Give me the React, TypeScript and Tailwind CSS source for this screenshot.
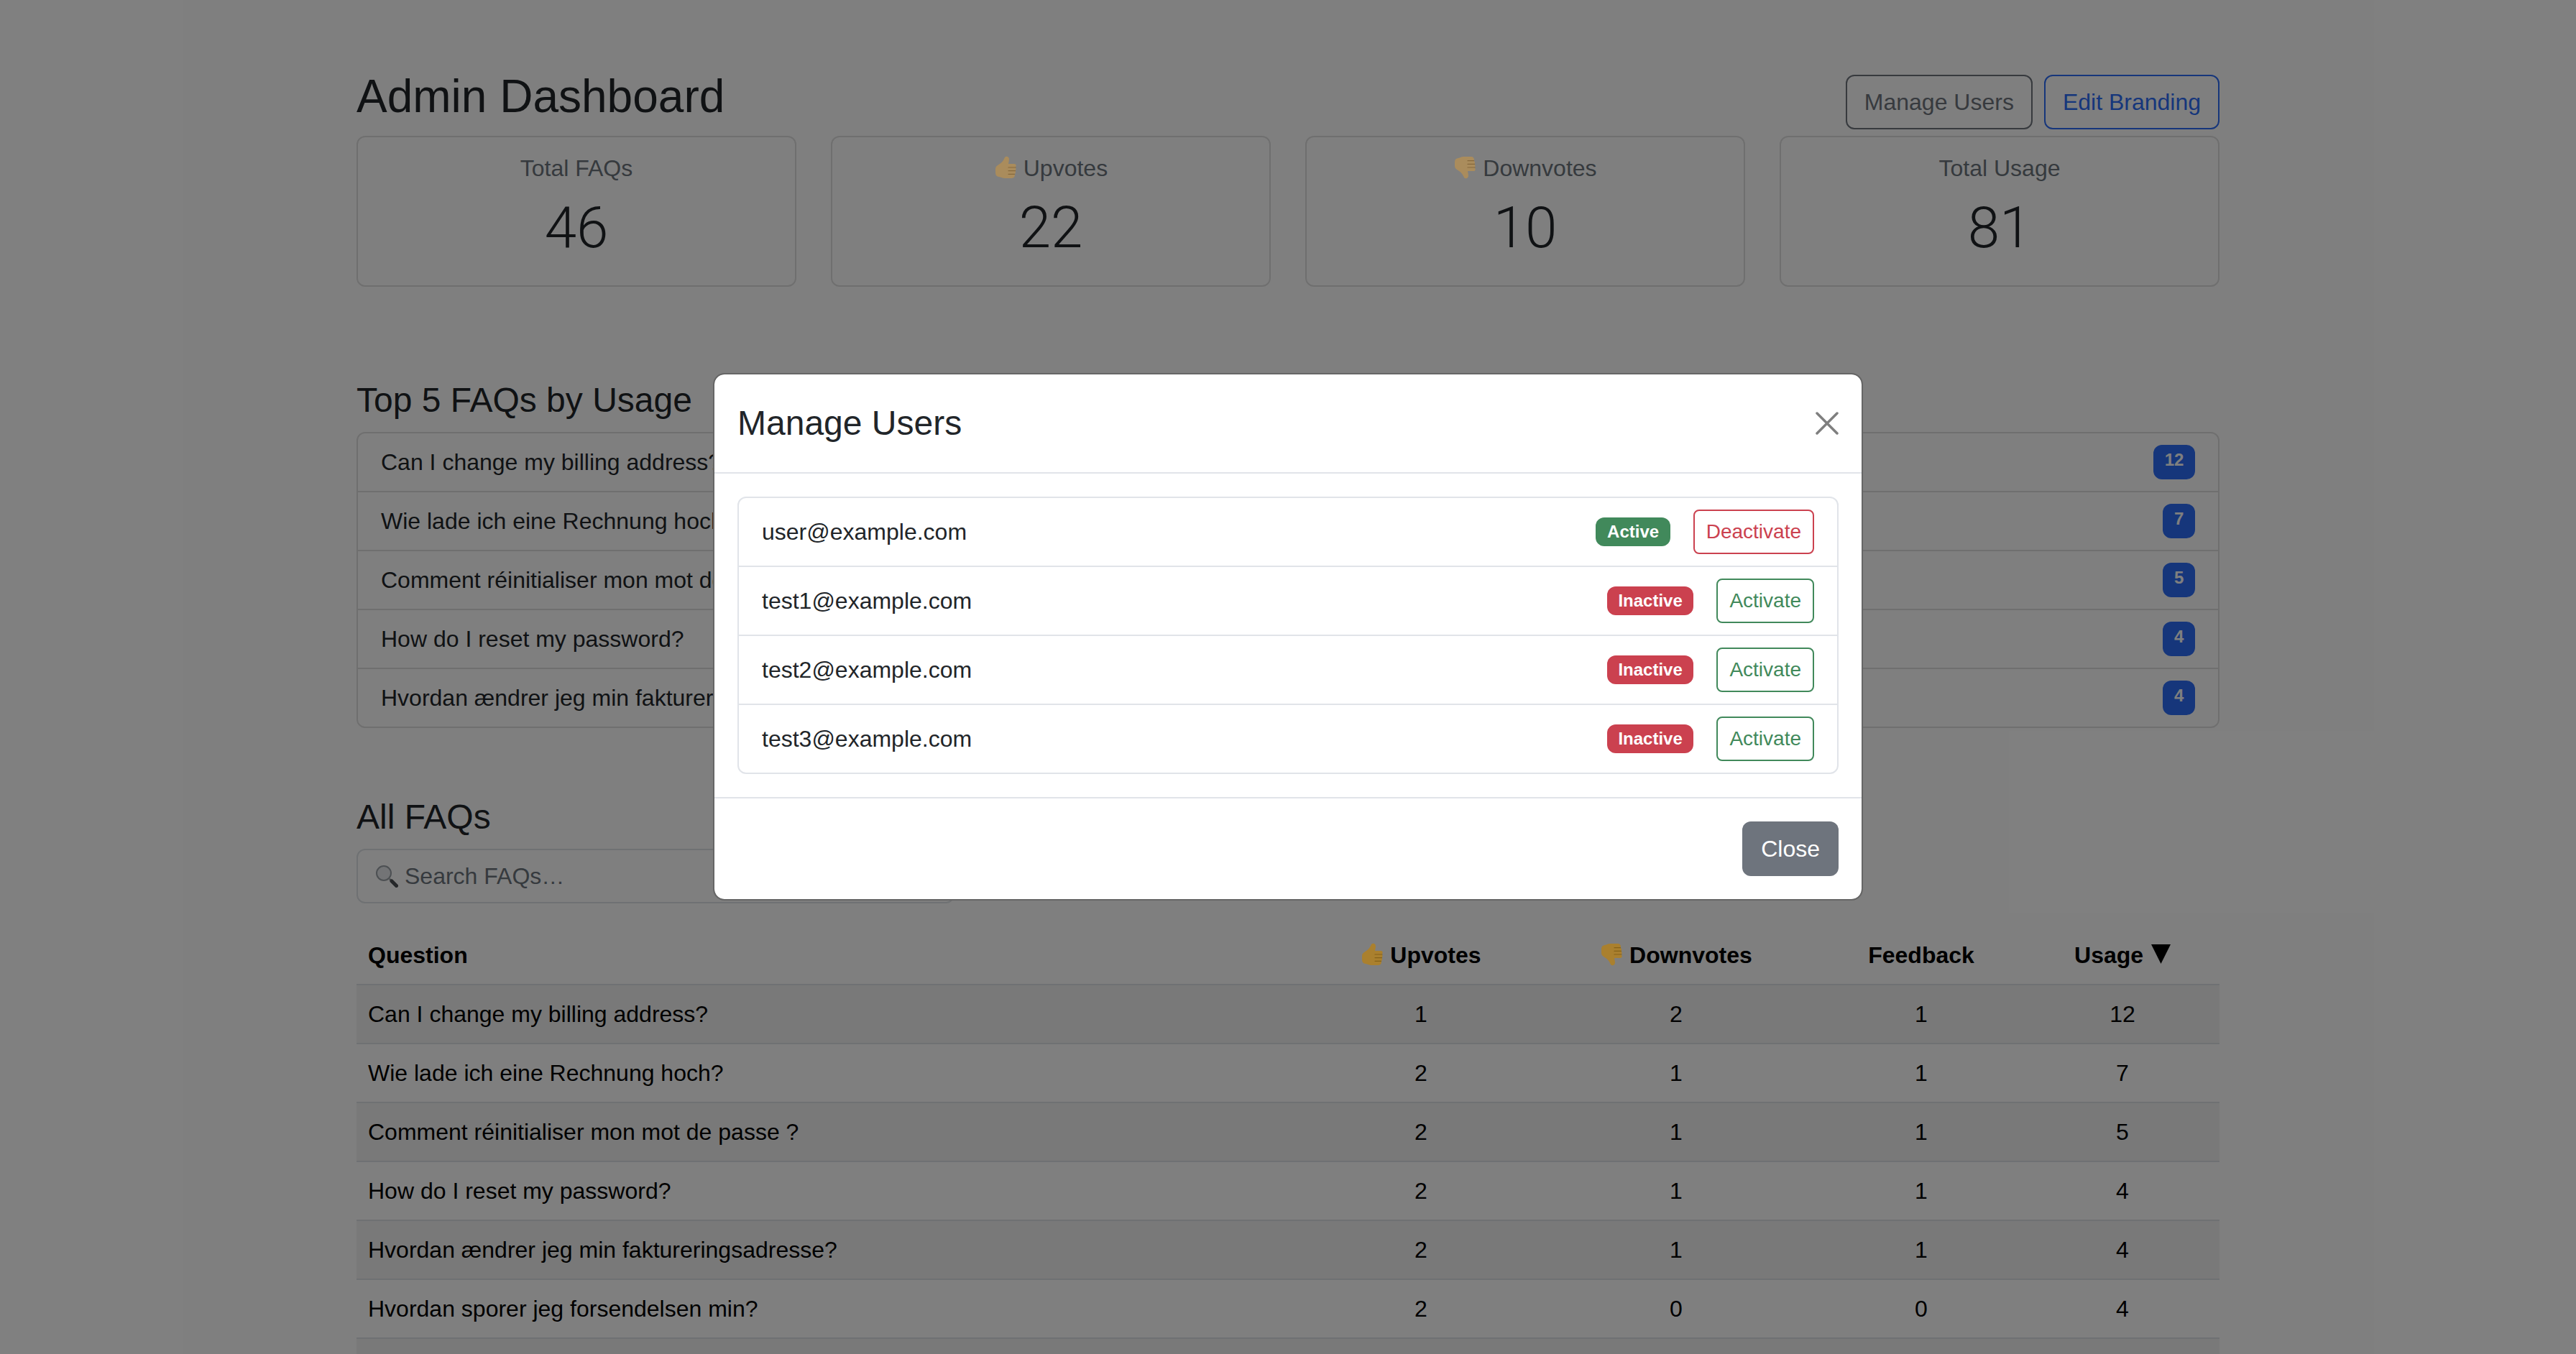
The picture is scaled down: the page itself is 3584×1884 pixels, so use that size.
import * as React from 'react'

const topFaqs = [
  { question: 'Can I change my billing address?', usage: 12 },
  { question: 'Wie lade ich eine Rechnung hoch?', usage: 7 },
  { question: 'Comment réinitialiser mon mot de passe ?', usage: 5 },
  { question: 'How do I reset my password?', usage: 4 },
  { question: 'Hvordan ændrer jeg min faktureringsadresse?', usage: 4 },
]

const allFaqs = [
  { question: 'Can I change my billing address?', up: 1, down: 2, feedback: 1, usage: 12 },
  { question: 'Wie lade ich eine Rechnung hoch?', up: 2, down: 1, feedback: 1, usage: 7 },
  { question: 'Comment réinitialiser mon mot de passe ?', up: 2, down: 1, feedback: 1, usage: 5 },
  { question: 'How do I reset my password?', up: 2, down: 1, feedback: 1, usage: 4 },
  { question: 'Hvordan ændrer jeg min faktureringsadresse?', up: 2, down: 1, feedback: 1, usage: 4 },
  { question: 'Hvordan sporer jeg forsendelsen min?', up: 2, down: 0, feedback: 0, usage: 4 },
]

const users = [
  { email: 'user@example.com', active: true },
  { email: 'test1@example.com', active: false },
  { email: 'test2@example.com', active: false },
  { email: 'test3@example.com', active: false },
]

// emoji style thumb, sits above the backdrop so it keeps its colour
function Thumb({ down = false, muted = false }: { down?: boolean; muted?: boolean }) {
  const fill = muted ? '#aa8c5c' : '#aa802e'
  const line = muted ? '#86683c' : '#856118'
  return (
    <svg
      viewBox="0 0 32 32"
      className={`relative z-20 inline-block h-[32px] w-[32px] align-[-4px] ${down ? '-scale-y-100' : ''}`}
    >
      <path
        fill={fill}
        d="M2 18C2 15 4 13.500 6.500 12 10 10 13 7 14.500 3 15.200 1 17 .3 18.700 1 20.800 1.800 21.300 4 20.800 6.500L20 11H28C30 11 31 12.400 30.600 14 30.500 14.800 30 15.500 29.500 16 30.300 16.600 30.700 17.500 30.500 18.500 30.400 19.500 29.800 20.200 29.200 20.600 29.900 21.200 30.200 22.200 30 23.200 29.800 24.200 29.200 24.900 28.500 25.300 29 26 29.100 26.800 28.900 27.600 28.500 29.400 27.200 31 25 31H15C12 31 10 30 8 29.300 6.500 28.800 5 28.600 4 28 2.700 27 2 25.500 2 23Z"
      />
      <path
        fill="none"
        stroke={line}
        strokeWidth="1.200"
        strokeLinecap="round"
        d="M20 16h10M20 20.600h9.500M20 25.300h8.500"
      />
    </svg>
  )
}

function SearchGlass() {
  return (
    <svg viewBox="0 0 32 32" className="h-[32px] w-[32px] shrink-0">
      <circle cx="12" cy="12" r="10" fill="#e6e9ec" stroke="#9aa0a6" strokeWidth="2" />
      <path d="M20 20l2.500 2.500" stroke="#8a8f94" strokeWidth="2.500" />
      <path d="M23 23l6.500 6.500" stroke="#4a4e52" strokeWidth="5" strokeLinecap="round" />
    </svg>
  )
}

function SortArrow() {
  return (
    <svg viewBox="0 0 27 27" className="ml-[2px] inline-block h-[27px] w-[27px] align-[-1px]">
      <path d="M0 0h27L13.500 27z" fill="#000" />
    </svg>
  )
}

function StatCard({ label, value }: { label: React.ReactNode; value: number }) {
  return (
    <div className="h-[210px] rounded-[12px] border-2 border-[#dfdfdf] pt-[19px] text-center">
      <div className="text-[#6c757d]">{label}</div>
      <div className="mt-[11px] font-['Roboto',sans-serif] text-[80px] font-light leading-[96px]">
        {value}
      </div>
    </div>
  )
}

export default function App() {
  return (
    <div className="relative h-[1884px] overflow-hidden bg-white font-['Liberation_Sans',Arial,sans-serif] text-[32px] leading-[48px] text-[#212529]">
      <div className="mx-auto w-[2592px] pt-[96px]">
        <div className="flex items-center justify-between">
          <h2 className="mb-[16px] text-[64px] font-normal leading-[76.800px]">Admin Dashboard</h2>
          <div className="flex gap-[16px]">
            <button className="h-[76px] rounded-[12px] border-2 border-[#6e747d] px-[24px] text-[#6e747d]">
              Manage Users
            </button>
            <button className="h-[76px] rounded-[12px] border-2 border-[#2c6cf6] px-[24px] text-[#2c6cf6]">
              Edit Branding
            </button>
          </div>
        </div>

        <div className="grid grid-cols-4 gap-[48px]">
          <StatCard label="Total FAQs" value={46} />
          <StatCard
            label={
              <>
                <Thumb muted /> Upvotes
              </>
            }
            value={22}
          />
          <StatCard
            label={
              <>
                <Thumb down muted /> Downvotes
              </>
            }
            value={10}
          />
          <StatCard label="Total Usage" value={81} />
        </div>

        <h4 className="mb-[16px] mt-[129px] text-[48px] font-normal leading-[57.600px]">Top 5 FAQs by Usage</h4>
        <ul className="rounded-[12px] border-2 border-[#dfdfdf]">
          {topFaqs.map((faq, i) => (
            <li
              key={faq.question}
              className={`flex justify-between px-[32px] py-[16px] ${i < topFaqs.length - 1 ? 'border-b-2 border-[#dfdfdf]' : ''}`}
            >
              <span>{faq.question}</span>
              <span className="rounded-[12px] bg-[#2c6cf6] px-[15.600px] py-[8.400px] text-[24px] font-bold leading-[24px] text-white">
                {faq.usage}
              </span>
            </li>
          ))}
        </ul>

        <h4 className="mb-[15px] mt-[95px] text-[48px] font-normal leading-[57.600px]">All FAQs</h4>
        <div className="mb-[32px] flex h-[76px] w-[832px] items-center gap-[9px] rounded-[12px] border-2 border-[#dee2e6] px-[24px] text-[#6c757d]">
          <SearchGlass />
          <span>Search FAQs…</span>
        </div>

        <table className="w-full table-fixed border-separate border-spacing-0 text-black">
          <thead>
            <tr className="font-bold">
              <th className="w-[1322px] border-b-2 border-[#dee2e6] px-[16px] py-[16px] text-left font-bold">Question</th>
              <th className="w-[318px] border-b-2 border-[#dee2e6] px-[16px] py-[16px] font-bold">
                <Thumb /> Upvotes
              </th>
              <th className="w-[392px] border-b-2 border-[#dee2e6] px-[16px] py-[16px] font-bold">
                <Thumb down /> Downvotes
              </th>
              <th className="w-[290px] border-b-2 border-[#dee2e6] px-[16px] py-[16px] font-bold">Feedback</th>
              <th className="w-[270px] border-b-2 border-[#dee2e6] px-[16px] py-[16px] font-bold">
                Usage <SortArrow />
              </th>
            </tr>
          </thead>
          <tbody>
            {allFaqs.map((faq, i) => (
              <tr key={faq.question} className={i % 2 === 0 ? 'bg-[#f2f2f2]' : ''}>
                <td className="border-b-2 border-[#dee2e6] px-[16px] py-[16px]">{faq.question}</td>
                <td className="border-b-2 border-[#dee2e6] px-[16px] py-[16px] text-center">{faq.up}</td>
                <td className="border-b-2 border-[#dee2e6] px-[16px] py-[16px] text-center">{faq.down}</td>
                <td className="border-b-2 border-[#dee2e6] px-[16px] py-[16px] text-center">{faq.feedback}</td>
                <td className="border-b-2 border-[#dee2e6] px-[16px] py-[16px] text-center">{faq.usage}</td>
              </tr>
            ))}
            <tr className="bg-[#f2f2f2]">
              <td colSpan={5} className="h-[82px]" />
            </tr>
          </tbody>
        </table>
      </div>

      {/* backdrop */}
      <div className="absolute inset-0 z-10 bg-black/50" />

      {/* modal */}
      <div className="absolute inset-x-0 top-[519px] z-30 flex justify-center">
        <div className="w-[1600px] rounded-[16px] border-2 border-[#666666] bg-white bg-clip-padding">
          <div className="flex items-center justify-between border-b-2 border-[#e1e4e9] p-[32px]">
            <h4 className="text-[48px] font-normal leading-[72px]">Manage Users</h4>
            <svg viewBox="0 0 32 32" className="h-[32px] w-[32px]">
              <path d="M2 2l28 28M30 2L2 30" stroke="#7f7f7f" strokeWidth="3.500" strokeLinecap="round" fill="none" />
            </svg>
          </div>

          <div className="p-[32px]">
            <ul className="rounded-[12px] border-2 border-[#e1e4e9]">
              {users.map((user, i) => (
                <li
                  key={user.email}
                  className={`flex items-center justify-between px-[32px] py-[16px] ${i < users.length - 1 ? 'border-b-2 border-[#e1e4e9]' : ''}`}
                >
                  <span>{user.email}</span>
                  <div className="flex items-center gap-[32px]">
                    <span
                      className={`rounded-[12px] px-[15.600px] py-[8.400px] text-[24px] font-bold leading-[24px] text-white ${user.active ? 'bg-[#41895b]' : 'bg-[#cb414f]'}`}
                    >
                      {user.active ? 'Active' : 'Inactive'}
                    </span>
                    <button
                      className={`h-[62px] rounded-[8px] border-2 px-[16px] text-[28px] leading-[42px] ${user.active ? 'border-[#cb414f] text-[#cb414f]' : 'border-[#41895b] text-[#41895b]'}`}
                    >
                      {user.active ? 'Deactivate' : 'Activate'}
                    </button>
                  </div>
                </li>
              ))}
            </ul>
          </div>

          <div className="flex justify-end border-t-2 border-[#e1e4e9] p-[32px]">
            <button className="h-[76px] rounded-[12px] bg-[#6e747d] px-[26px] text-white">Close</button>
          </div>
        </div>
      </div>
    </div>
  )
}
